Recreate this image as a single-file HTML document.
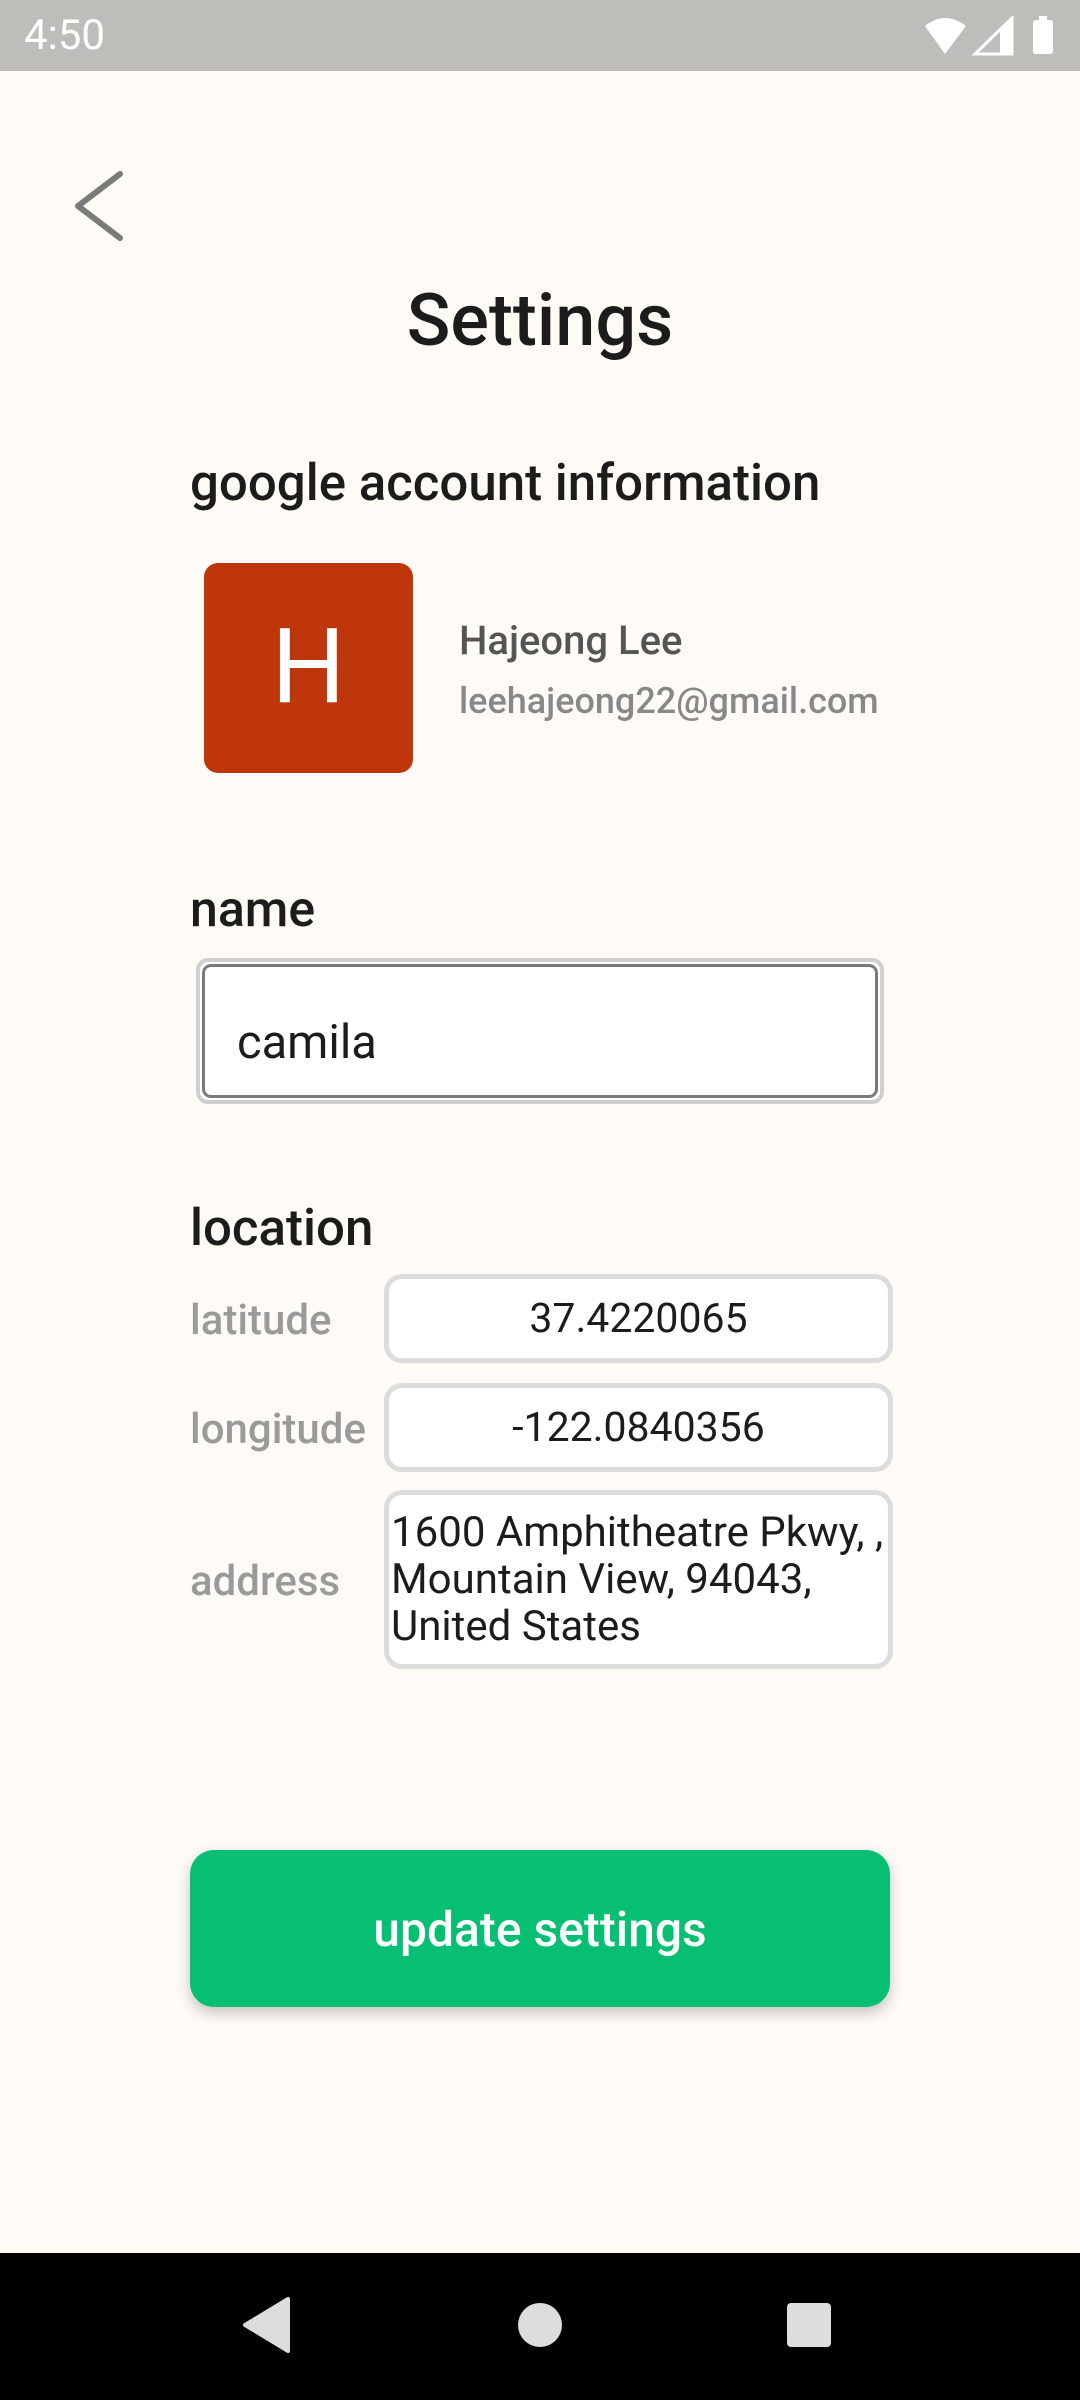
<!DOCTYPE html>
<html><head><meta charset="utf-8"><style>
*{margin:0;padding:0;box-sizing:border-box}
body{width:1080px;height:2400px;background:#fefbf6;font-family:"Roboto","Liberation Sans",sans-serif;position:relative;overflow:hidden;color:#1c1c1c}
.a{position:absolute;white-space:nowrap}
.box{position:absolute;background:#fff;border:5px solid #dcdcdc;border-radius:18px}
</style></head><body>
<div class="a" style="left:0;top:0;width:1080px;height:71px;background:#bebdb9"></div>
<div class="a" style="left:24px;top:11px;font-size:42px;color:#fff">4:50</div>
<svg class="a" style="left:920px;top:16px" width="140" height="40" viewBox="0 0 140 40">
<path d="M5 10 Q25 -6 46 10 L25 38 Z" fill="#fff"/>
<path d="M55 38 L92 2 L92 38 Z" fill="none" stroke="#fff" stroke-width="3"/>
<path d="M80 14 L92 2 L92 38 L80 38Z" fill="#fff"/>
<rect x="113" y="4" width="20" height="34" rx="3" fill="#fff"/><rect x="119" y="0" width="8" height="6" fill="#fff"/>
</svg>
<svg class="a" style="left:68px;top:166px" width="64" height="78" viewBox="0 0 64 78"><path d="M52 8 L10 40 L52 72" fill="none" stroke="#7a7a7a" stroke-width="6" stroke-linecap="round" stroke-linejoin="round"/></svg>
<div class="a" style="left:0;width:1080px;text-align:center;top:278px;font-size:72px;font-weight:500">Settings</div>
<div class="a" style="left:190px;top:454px;font-size:51px;font-weight:500">google account information</div>
<div class="a" style="left:204px;top:563px;width:209px;height:210px;background:#bf360c;border-radius:14px;color:#fff;font-size:104px;text-align:center;line-height:210px">H</div>
<div class="a" style="left:459px;top:617px;font-size:40px;font-weight:500;color:#555">Hajeong Lee</div>
<div class="a" style="left:459px;top:680px;font-size:36px;color:#888;font-weight:500">leehajeong22@gmail.com</div>
<div class="a" style="left:190px;top:881px;font-size:50px;font-weight:500">name</div>
<div class="a" style="left:196px;top:958px;width:688px;height:146px;border:4px solid #cfcfcf;border-radius:12px;background:#fff"><div style="position:absolute;left:2px;top:2px;right:2px;bottom:2px;border:3px solid #7a7a7a;border-radius:9px"></div></div>
<div class="a" style="left:237px;top:1015px;font-size:47px">camila</div>
<div class="a" style="left:190px;top:1199px;font-size:51px;font-weight:500">location</div>
<div class="a" style="left:190px;top:1296px;font-size:42px;color:#9a9a9a;font-weight:500">latitude</div>
<div class="box" style="left:384px;top:1274px;width:509px;height:89px;text-align:center;font-size:41px;line-height:81px">37.4220065</div>
<div class="a" style="left:190px;top:1405px;font-size:42px;color:#9a9a9a;font-weight:500">longitude</div>
<div class="box" style="left:384px;top:1383px;width:509px;height:89px;text-align:center;font-size:41px;line-height:81px">-122.0840356</div>
<div class="a" style="left:190px;top:1557px;font-size:42px;color:#9a9a9a;font-weight:500">address</div>
<div class="box" style="left:384px;top:1490px;width:509px;height:179px;font-size:42px;line-height:47px;padding:14px 0 0 2px;white-space:nowrap">1600 Amphitheatre Pkwy, ,<br>Mountain View, 94043,<br>United States</div>
<div class="a" style="left:190px;top:1850px;width:700px;height:157px;background:#07bf72;border-radius:24px;box-shadow:0 6px 14px rgba(0,0,0,.22);color:#fff;font-size:48px;font-weight:500;text-align:center;line-height:160px">update settings</div>
<div class="a" style="left:0;top:2253px;width:1080px;height:147px;background:#000"></div>
<svg class="a" style="left:0;top:2253px" width="1080" height="147"><path d="M288 46 L288 98 L245 72 Z" fill="#ddd" stroke="#ddd" stroke-width="4" stroke-linejoin="round"/><circle cx="540" cy="72" r="22" fill="#ddd"/><rect x="787" y="50" width="44" height="44" rx="4" fill="#ddd"/></svg>
</body></html>
